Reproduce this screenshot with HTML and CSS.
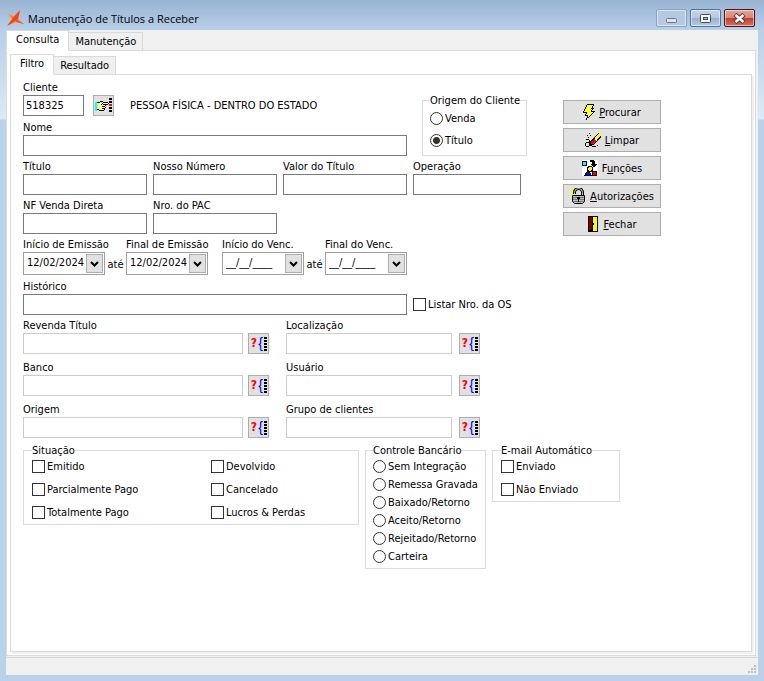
FILE: index.html
```html
<!DOCTYPE html>
<html lang="pt-BR">
<head>
    <meta charset="UTF-8">
    <meta name="viewport" content="width=device-width, initial-scale=1.0">
    <title>Manutenção de Títulos a Receber</title>
    <link rel="stylesheet" href="styles.css">
</head>
<body>
    <div class="window">
        <header class="titlebar">
            <svg class="logo" width="17" height="17" viewBox="0 0 17 17" aria-hidden="true">
                <path d="M1 4L7 6L13 0L11 8L12 10L17 14L9 12L0 16L5 9Z" fill="#fb8a1e"/>
                <path d="M13 0L11 9L0 16L6 8Z" fill="#f4421f"/>
                <path d="M9 9L17 14L9 12Z" fill="#f4561f"/>
            </svg>
            <h1>Manutenção de Títulos a Receber</h1>
            <div class="window-buttons">
                <button class="win-btn minimize" aria-label="Minimizar">
                    <svg width="13" height="11" viewBox="0 0 13 11"><rect x="1.5" y="5.5" width="10" height="4" rx="1" fill="#e4e4e4" stroke="#6b7280"/></svg>
                </button>
                <button class="win-btn" aria-label="Maximizar">
                    <svg width="13" height="11" viewBox="0 0 13 11"><rect x="1.5" y="1.5" width="10" height="8" rx="1" fill="#f6f6f6" stroke="#454b5c"/><rect x="4.5" y="4.5" width="4" height="2" fill="#a9bfdb" stroke="#454b5c"/></svg>
                </button>
                <button class="win-btn close" aria-label="Fechar janela">
                    <svg width="13" height="11" viewBox="0 0 13 11"><path d="M2 1.5L11 9.5M11 1.5L2 9.5" stroke="#5a3540" stroke-width="4.5"/><path d="M2.5 2L10.5 9M10.5 2L2.5 9" stroke="#f7f7f7" stroke-width="2.5"/></svg>
                </button>
            </div>
        </header>

        <main class="client">
            <nav class="tabs">
                <button class="tab active">Consulta</button>
                <button class="tab">Manutenção</button>
            </nav>
            <div class="page">
                <nav class="tabs">
                    <button class="tab active">Filtro</button>
                    <button class="tab">Resultado</button>
                </nav>
                <form class="panel">
                    <div class="upper">
                        <div class="fields">
                            <div class="top-row">
                                <div class="client-fields">
                                    <div class="row client-row">
                                        <div class="field code">
                                            <label for="cliente">Cliente</label>
                                            <input type="text" id="cliente" value="518325">
                                        </div>
                                        <button type="button" class="icon-btn" aria-label="Buscar cliente">
                                            <svg width="17" height="15" viewBox="0 0 17 15" shape-rendering="crispEdges">
                                                <path d="M0 4h2v9h-2z" fill="#0ff"/>
                                                <path d="M3 5h5v-1h1v1h5v1h-5v1h1v2h-1v2h-1v1h-4l-1-1z" fill="#ffff80"/>
                                                <path d="M2 4h3v1h-3zM5 3h3v1h-3zM8 4h5v1h-5zM13 5h1v1h-1zM8 6h5v1h-5zM7 5h1v1h-1zM6 6h1v1h-1zM10 7h1v1h-1zM7 8h3v1h-3zM10 9h1v1h-1zM7 10h3v1h-3zM9 11h1v1h-1zM4 12h5v1h-5zM2 11h2v1h-2z" fill="#000"/>
                                                <path d="M15.5 0v15" stroke="#000" stroke-width="3" stroke-dasharray="2 1"/>
                                                <path d="M14 6h3v2h-3z" fill="#f00"/>
                                            </svg>
                                        </button>
                                        <span class="client-name">PESSOA FÍSICA - DENTRO DO ESTADO</span>
                                    </div>
                                    <div class="field">
                                        <label for="nome">Nome</label>
                                        <input type="text" id="nome">
                                    </div>
                                </div>
                                <fieldset class="group origin">
                                    <legend>Origem do Cliente</legend>
                                    <label class="option"><input type="radio" name="origem-cliente">Venda</label>
                                    <label class="option"><input type="radio" name="origem-cliente" checked>Título</label>
                                </fieldset>
                            </div>

                            <div class="row numbers">
                                <div class="field">
                                    <label for="titulo">Título</label>
                                    <input type="text" id="titulo">
                                </div>
                                <div class="field">
                                    <label for="nosso-numero">Nosso Número</label>
                                    <input type="text" id="nosso-numero">
                                </div>
                                <div class="field">
                                    <label for="valor">Valor do Título</label>
                                    <input type="text" id="valor">
                                </div>
                                <div class="field operation">
                                    <label for="operacao">Operação</label>
                                    <input type="text" id="operacao">
                                </div>
                                <div class="field">
                                    <label for="nf">NF Venda Direta</label>
                                    <input type="text" id="nf">
                                </div>
                                <div class="field">
                                    <label for="pac">Nro. do PAC</label>
                                    <input type="text" id="pac">
                                </div>
                            </div>

                            <!-- Date ranges -->
                            <div class="row dates">
                                <div class="field">
                                    <label for="emissao-ini">Início de Emissão</label>
                                    <div class="date"><input type="text" id="emissao-ini" value="12/02/2024"><button type="button" aria-label="Abrir calendário"><svg width="9" height="6" viewBox="0 0 9 6"><path d="M1 1L4.5 4.5L8 1" fill="none" stroke="#000" stroke-width="2"/></svg></button></div>
                                </div>
                                <span class="until">até</span>
                                <div class="field">
                                    <label for="emissao-fim">Final de Emissão</label>
                                    <div class="date"><input type="text" id="emissao-fim" value="12/02/2024"><button type="button" aria-label="Abrir calendário"><svg width="9" height="6" viewBox="0 0 9 6"><path d="M1 1L4.5 4.5L8 1" fill="none" stroke="#000" stroke-width="2"/></svg></button></div>
                                </div>
                                <span></span>
                                <div class="field">
                                    <label for="venc-ini">Início do Venc.</label>
                                    <div class="date"><input type="text" id="venc-ini" value="__/__/____"><button type="button" aria-label="Abrir calendário"><svg width="9" height="6" viewBox="0 0 9 6"><path d="M1 1L4.5 4.5L8 1" fill="none" stroke="#000" stroke-width="2"/></svg></button></div>
                                </div>
                                <span class="until">até</span>
                                <div class="field">
                                    <label for="venc-fim">Final do Venc.</label>
                                    <div class="date"><input type="text" id="venc-fim" value="__/__/____"><button type="button" aria-label="Abrir calendário"><svg width="9" height="6" viewBox="0 0 9 6"><path d="M1 1L4.5 4.5L8 1" fill="none" stroke="#000" stroke-width="2"/></svg></button></div>
                                </div>
                            </div>

                            <div class="row history">
                                <div class="field">
                                    <label for="historico">Histórico</label>
                                    <input type="text" id="historico">
                                </div>
                                <label class="option"><input type="checkbox">Listar Nro. da OS</label>
                            </div>

                            <!-- Lookups -->
                            <div class="lookups">
                                <div class="lookup">
                                    <div class="field">
                                        <label for="revenda">Revenda Título</label>
                                        <input type="text" id="revenda">
                                    </div>
                                    <button type="button" class="icon-btn find" aria-label="Buscar revenda"><b>?</b><i>{</i></button>
                                </div>
                                <div class="lookup second">
                                    <div class="field">
                                        <label for="localizacao">Localização</label>
                                        <input type="text" id="localizacao">
                                    </div>
                                    <button type="button" class="icon-btn find" aria-label="Buscar localização"><b>?</b><i>{</i></button>
                                </div>
                                <div class="lookup">
                                    <div class="field">
                                        <label for="banco">Banco</label>
                                        <input type="text" id="banco">
                                    </div>
                                    <button type="button" class="icon-btn find" aria-label="Buscar banco"><b>?</b><i>{</i></button>
                                </div>
                                <div class="lookup second">
                                    <div class="field">
                                        <label for="usuario">Usuário</label>
                                        <input type="text" id="usuario">
                                    </div>
                                    <button type="button" class="icon-btn find" aria-label="Buscar usuário"><b>?</b><i>{</i></button>
                                </div>
                                <div class="lookup">
                                    <div class="field">
                                        <label for="origem">Origem</label>
                                        <input type="text" id="origem">
                                    </div>
                                    <button type="button" class="icon-btn find" aria-label="Buscar origem"><b>?</b><i>{</i></button>
                                </div>
                                <div class="lookup second">
                                    <div class="field">
                                        <label for="grupo">Grupo de clientes</label>
                                        <input type="text" id="grupo">
                                    </div>
                                    <button type="button" class="icon-btn find" aria-label="Buscar grupo"><b>?</b><i>{</i></button>
                                </div>
                            </div>
                        </div>

                        <!-- Actions -->
                        <div class="actions">
                            <button type="button" class="btn">
                                <svg width="12" height="16" viewBox="0 0 12 16" shape-rendering="crispEdges"><path d="M4 0h7l-2 4h2l-2 4h2l-8 8 2-5h-3l2-3h-4z" fill="#ff3"/><path d="M4 0h7v1h-7zM3 1h1v2h-1zM2 3h1v2h-1zM1 5h1v2h-1zM0 7h1v1h-1zM0 8h4v1h-4zM3 9h1v1h-1zM2 10h1v1h-1zM2 11h3v1h-3zM4 12h1v2h-1zM3 14h1v2h-1zM10 1h1v1h-1zM9 2h1v2h-1zM8 4h3v1h-3zM9 5h1v1h-1zM8 6h1v1h-1zM8 7h4v1h-4zM10 8h1v1h-1zM9 9h1v1h-1zM8 10h1v1h-1zM7 11h1v1h-1zM6 12h1v1h-1zM5 13h1v1h-1z" fill="#000"/></svg>
                                <span><u>P</u>rocurar</span>
                            </button>
                            <button type="button" class="btn">
                                <svg width="16" height="16" viewBox="0 0 16 16" shape-rendering="crispEdges"><path d="M5 10L13 1h3v4L8 13H5z" fill="#000"/><path d="M10 6L14 1h2v2L12 8z" fill="#ff0"/><path d="M6 10L10 6l2 2L8 12H6z" fill="#f00"/><path d="M9 7l1-1 2 2-1 1z" fill="#fff"/><path d="M4 1h1v1h-1zM2 3h1v1h-1zM5 3h1v1h-1zM3 5h1v1h-1zM1 7h3v1h-3zM4 8h1v5h-1zM1 10h3v1h-3zM0 11h1v3h-1zM1 14h3v1h-3zM5 13h2v1h-2zM4 13h1v1h-1zM7 14h4v1h-4zM12 13h1v1h-1z" fill="#000"/></svg>
                                <span><u>L</u>impar</span>
                            </button>
                            <button type="button" class="btn">
                                <svg width="16" height="16" viewBox="0 0 16 16" shape-rendering="crispEdges"><path d="M0 0h16v16h-16z" fill="#fff"/><path d="M0 1h5v5h-5z" fill="#000"/><path d="M1 2h3v3h-3z" fill="#0ff"/><path d="M8 0h4v1h1v3h2l-3 4-4-4h2v-2h-2z" fill="#000"/><circle cx="8" cy="9" r="2.5" fill="#ff0" stroke="#000"/><path d="M6 10L9 15H3z" fill="#00f" stroke="#000"/><path d="M10 11h5v5h-5z" fill="#000"/><path d="M11 12h3v3h-3z" fill="#f00"/></svg>
                                <span>F<u>u</u>nções</span>
                            </button>
                            <button type="button" class="btn">
                                <svg width="16" height="16" viewBox="0 0 16 16"><path d="M0 2l3 2M3 0l1 4M0 6h4M1 9l3-2" stroke="#ff0" stroke-width="1.5"/><path d="M4.500 6V4.500a4 4 0 0 1 8 0V8" fill="none" stroke="#000" stroke-width="3"/><path d="M4.500 6V4.500a4 4 0 0 1 8 0V8" fill="none" stroke="#ccc" stroke-width="1"/><path d="M2.500 7.500h12v6l-2 2h-8l-2-2z" fill="#bbb" stroke="#000"/><path d="M3 9.500h11M3 11.500h11M3 13.500h11" stroke="#777"/><path d="M7 9h3v2h-1v3h-1v-3h-1z" fill="#000"/></svg>
                                <span><u>A</u>utorizações</span>
                            </button>
                            <button type="button" class="btn">
                                <svg width="12" height="16" viewBox="0 0 12 16" shape-rendering="crispEdges"><path d="M1 0h10v16h-10z" fill="#000"/><path d="M2 1h4v13h-4z" fill="#800000"/><path d="M2 14l4-1v2z" fill="#000"/><path d="M6 1h4v14h-4z" fill="#ff0"/><path d="M5 1h1v14h-1zM6 7h1v2h-1z" fill="#000"/></svg>
                                <span><u>F</u>echar</span>
                            </button>
                        </div>
                    </div>

                    <div class="groups">
                        <fieldset class="group status">
                            <legend>Situação</legend>
                            <label class="option"><input type="checkbox">Emitido</label>
                            <label class="option"><input type="checkbox">Devolvido</label>
                            <label class="option"><input type="checkbox">Parcialmente Pago</label>
                            <label class="option"><input type="checkbox">Cancelado</label>
                            <label class="option"><input type="checkbox">Totalmente Pago</label>
                            <label class="option"><input type="checkbox">Lucros &amp; Perdas</label>
                        </fieldset>
                        <fieldset class="group bank">
                            <legend>Controle Bancário</legend>
                            <label class="option"><input type="radio" name="controle">Sem Integração</label>
                            <label class="option"><input type="radio" name="controle">Remessa Gravada</label>
                            <label class="option"><input type="radio" name="controle">Baixado/Retorno</label>
                            <label class="option"><input type="radio" name="controle">Aceito/Retorno</label>
                            <label class="option"><input type="radio" name="controle">Rejeitado/Retorno</label>
                            <label class="option"><input type="radio" name="controle">Carteira</label>
                        </fieldset>
                        <fieldset class="group email">
                            <legend>E-mail Automático</legend>
                            <label class="option"><input type="checkbox">Enviado</label>
                            <label class="option"><input type="checkbox">Não Enviado</label>
                        </fieldset>
                    </div>
                </form>
            </div>
            <footer class="statusbar">
                <svg width="8" height="8" viewBox="0 0 8 8" shape-rendering="crispEdges" aria-hidden="true"><path d="M6 0h2v2h-2zM3 3h2v2h-2zM6 3h2v2h-2zM0 6h2v2h-2zM3 6h2v2h-2zM6 6h2v2h-2z" fill="#bfbfbf"/></svg>
            </footer>
        </main>
    </div>
</body>
</html>
```
FILE: styles.css
```css
* {
    box-sizing: border-box;
}

body {
    margin: 0;
    font-family: "DejaVu Sans Condensed", Tahoma, sans-serif;
    font-size: 11px;
    color: #000;
}

button, input {
    font: inherit;
    color: inherit;
}

button {
    padding: 0;
}

svg {
    display: block;
    flex: none;
}

.window {
    display: flex;
    flex-direction: column;
    min-height: 100vh;
    padding: 0 6px 6px;
    background: linear-gradient(to bottom, #98b4d3 0, #b8cfe8 30px, #dde9f6 119px, #b9d1ea 120px);
}

/* Title bar */
.titlebar {
    display: flex;
    align-items: center;
    height: 30px;
    padding: 6px 3px 0 1px;
}

.titlebar h1 {
    flex: 1;
    margin: 0 0 0 4px;
    font-family: "Open Sans", "Segoe UI", sans-serif;
    font-size: 11px;
    font-weight: normal;
}

.window-buttons {
    display: flex;
    gap: 3px;
}

.win-btn {
    display: flex;
    align-items: center;
    justify-content: center;
    width: 31px;
    height: 18px;
    border: 1px solid #59708f;
    border-radius: 2px;
    background: linear-gradient(to bottom, #c3d4e8 0, #b4c8e0 50%, #98b1cf 51%, #b4cbe5 100%);
    box-shadow: inset 0 0 0 1px rgba(255, 255, 255, 0.5);
}

.win-btn.minimize {
    border-color: #8ba2c0;
    background: linear-gradient(to bottom, #b4c8e0, #b4cbe5);
}

.win-btn.close {
    border-color: #4a1420;
    background: linear-gradient(to bottom, #e6a596 0, #d98474 50%, #bd3f2c 51%, #d4745c 100%);
}

/* Tabs */
.client {
    display: flex;
    flex: 1;
    flex-direction: column;
    background-color: #f0f0f0;
}

.tabs {
    display: flex;
    align-items: flex-end;
    height: 21px;
    margin-bottom: -1px;
}

.tab {
    position: relative;
    height: 19px;
    padding: 0 6px;
    border: 1px solid #d9d9d9;
    border-left: 0;
    background-color: #f0f0f0;
}

.tab.active {
    height: 21px;
    padding: 0 9px 2px;
    border-left: 1px solid #d9d9d9;
    border-bottom-color: #fff;
    background-color: #fff;
}

.page {
    display: flex;
    flex: 1;
    flex-direction: column;
    margin-right: 2px;
    padding: 3px;
    border: 1px solid #dcdcdc;
    background-color: #fff;
}

.panel {
    flex: 1;
    padding: 4px 12px;
    border: 1px solid #d9d9d9;
    box-shadow: 2px 2px 0 #f0f0f0;
}

/* Fields */
.upper {
    display: flex;
    align-items: flex-start;
    gap: 36px;
}

.fields {
    display: flex;
    flex-direction: column;
    gap: 2px;
    width: 504px;
}

.row, .top-row {
    display: flex;
}

.client-fields {
    display: flex;
    flex: 1;
    flex-direction: column;
    gap: 3px;
}

.client-row {
    align-items: flex-end;
    gap: 9px;
}

.field {
    display: flex;
    flex: 1;
    flex-direction: column;
}

.field label {
    height: 16px;
    line-height: 18px;
    white-space: nowrap;
}

.field > input {
    width: 100%;
    height: 21px;
    padding: 0 2px;
    border: 1px solid #7a7a7a;
    background-color: #fff;
}

.field.code {
    flex: none;
    width: 61px;
}

.client-name {
    padding-left: 7px;
    line-height: 21px;
}

.icon-btn {
    display: flex;
    align-items: center;
    justify-content: center;
    width: 21px;
    height: 21px;
    border: 1px solid #adadad;
    background-color: #e1e1e1;
}

/* Lookup button: red question mark, blue brace, dotted list */
.find b {
    width: 7px;
    font-size: 12px;
    line-height: 15px;
    color: #f00;
}

.find i {
    width: 6px;
    font-family: "Liberation Sans", Arial, sans-serif;
    font-size: 14px;
    font-style: normal;
    line-height: 15px;
    color: #00f;
}

.find::after {
    content: "";
    width: 3px;
    height: 14px;
    background: repeating-linear-gradient(to bottom, #000 0, #000 2px, transparent 2px, transparent 3px);
}

.numbers {
    display: grid;
    grid-template-columns: repeat(3, 124px) 108px;
    gap: 2px 6px;
}

.numbers .operation {
    grid-column: 4;
}

.dates {
    display: grid;
    grid-template-columns: 82px 21px 82px 14px 82px 21px 82px;
    align-items: end;
    padding-bottom: 1px;
}

.until {
    line-height: 21px;
    text-align: center;
}

.date {
    display: flex;
    height: 23px;
    padding: 1px;
    border: 1px solid #a0a0a0;
}

.date input {
    flex: 1;
    min-width: 0;
    padding: 0 0 2px 2px;
    border: 0;
}

.date button {
    display: flex;
    align-items: center;
    justify-content: center;
    width: 17px;
    border: 1px solid #adadad;
    background-color: #e1e1e1;
}

.history {
    align-items: flex-end;
    gap: 6px;
}

.history .field {
    flex: none;
    width: 384px;
}

.history .option {
    height: 21px;
}

.lookups {
    display: grid;
    grid-template-columns: 246px 194px;
    gap: 5px 17px;
}

.lookup {
    display: flex;
    align-items: flex-end;
    gap: 5px;
}

.lookup.second {
    gap: 7px;
}

.lookup .field > input {
    border-color: #ccc;
}

/* Buttons */
.actions {
    display: flex;
    flex-direction: column;
    gap: 4px;
    width: 98px;
    padding-top: 21px;
}

.btn {
    display: flex;
    align-items: center;
    justify-content: center;
    gap: 4px;
    height: 24px;
    border: 1px solid #adadad;
    background-color: #e1e1e1;
}

/* Groups */
.group {
    min-width: 0;
    margin: 0;
    padding: 0 7px 3px;
    border: 1px solid #dcdcdc;
}

.group legend {
    height: 14px;
    padding: 0;
    line-height: 15px;
    white-space: nowrap;
}

.option {
    display: flex;
    align-items: center;
    gap: 2px;
    height: 18px;
    white-space: nowrap;
}

.option input {
    flex: none;
    width: 13px;
    height: 13px;
    margin: 0;
    border: 1px solid #333;
    background-color: #fff;
    appearance: none;
}

.option input[type="radio"] {
    border-radius: 50%;
}

.option input:checked {
    background: radial-gradient(circle, #333 0, #333 3px, #fff 4px);
}

.origin {
    width: 105px;
    margin: 14px 0 0 15px;
    padding-bottom: 2px;
}

.origin .option {
    height: 22px;
}

.groups {
    display: flex;
    align-items: flex-start;
    gap: 6px;
    padding-top: 5px;
}

.status, .email {
    display: grid;
    gap: 5px 0;
    padding-left: 8px;
}

.status {
    grid-template-columns: 179px 1fr;
    width: 336px;
}

.bank {
    width: 121px;
}

.email {
    width: 128px;
}

/* Status bar */
.statusbar {
    display: flex;
    align-items: flex-end;
    justify-content: flex-end;
    height: 18px;
    margin-top: 1px;
    padding: 0 2px 2px;
    border-top: 1px solid #d7d7d7;
}
```
